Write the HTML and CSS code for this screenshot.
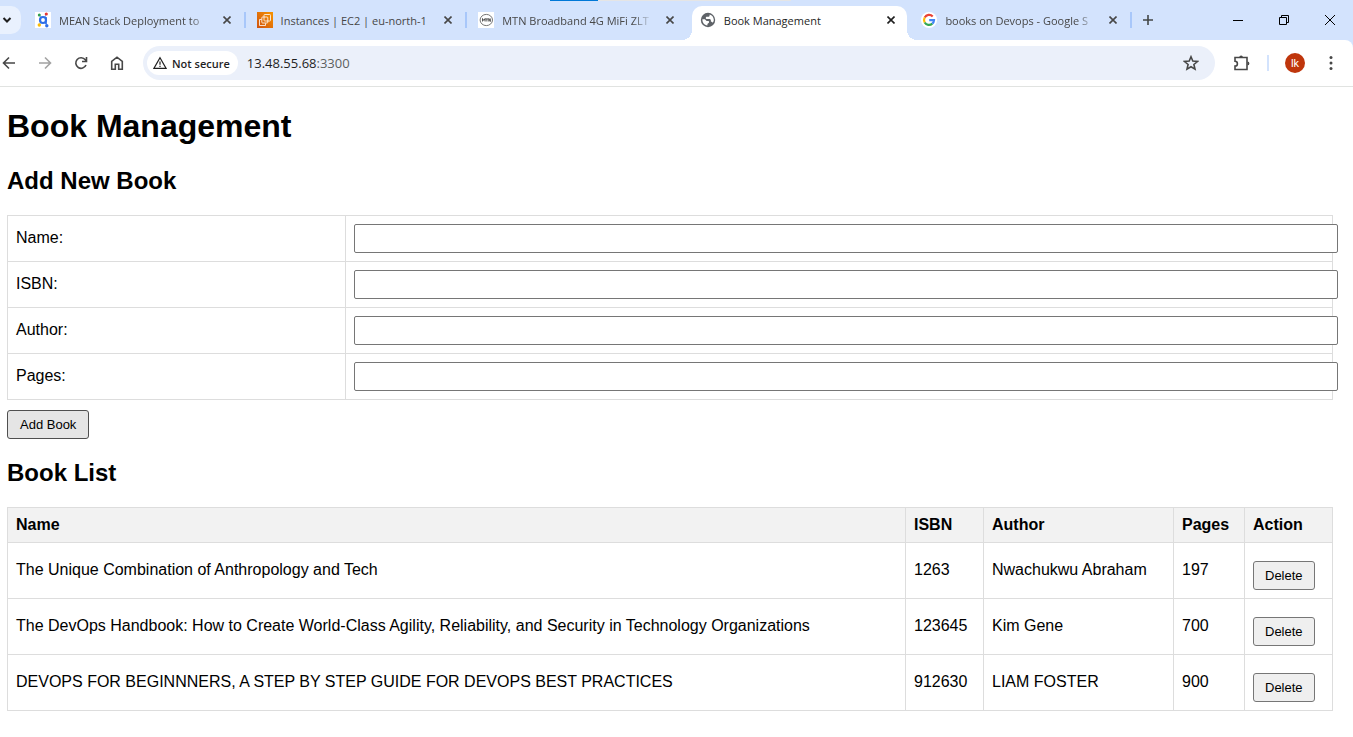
FILE: index.html
```html
<!DOCTYPE html>
<html lang="en">
<head>
<meta charset="utf-8">
<title>Book Management</title>
<link rel="stylesheet" href="styles.css">
</head>
<body>
<header class="browser">
  <div class="load-bar"><span class="load-bar-fill"></span></div>
  <div class="tab-strip">
    <button class="tab-search" aria-label="Search tabs">
      <svg width="12" height="12" viewBox="0 0 12 12" fill="none" stroke="#1f1f1f" stroke-width="2"><path d="M2.500 4 6 7.500 9.500 4"/></svg>
    </button>
    <ul class="tabs">
      <li class="tab">
        <svg class="favicon" viewBox="0 0 16 16"><rect width="16" height="16" fill="#fff"/><path d="M4.500 3.500 6 5.500M11 2.500 10 5M4 12.500 6 10.500M10.500 10.500 11.500 13.500" stroke="#8ab4f8" stroke-width="1"/><circle cx="8" cy="8" r="3" fill="none" stroke="#2f6fe8" stroke-width="2.200"/><path d="M11 5v7" stroke="#2f6fe8" stroke-width="1.600"/><circle cx="4.300" cy="3" r="1.500" fill="#2e9e4f"/><circle cx="11.300" cy="2" r="1.600" fill="#e53935"/><circle cx="4.300" cy="13" r="1.700" fill="#fbbc05"/><circle cx="11.800" cy="13.800" r="1.700" fill="#2f6fe8"/></svg>
        <a class="tab-title tab-title-long" href="#">MEAN Stack Deployment to</a>
        <button class="tab-close" aria-label="Close tab"><svg viewBox="0 0 8 8"><path d="M.5.5l7 7M7.500.5l-7 7"/></svg></button>
      </li>
      <li class="tab">
        <svg class="favicon" viewBox="0 0 16 16"><defs><linearGradient id="ec2" x1="0" y1="1" x2="1" y2="0"><stop stop-color="#cf5311"/><stop offset="1" stop-color="#f79400"/></linearGradient></defs><rect width="16" height="16" fill="url(#ec2)"/><g fill="none" stroke="#fff" stroke-width=".8"><rect x="7" y="2.500" width="6.500" height="6.500" rx=".8"/><rect x="4.800" y="5" width="6" height="6" rx=".8"/><path d="M4.500 7.500h-2v6h6v-2.200"/></g></svg>
        <a class="tab-title" href="#">Instances | EC2 | eu-north-1</a>
        <button class="tab-close" aria-label="Close tab"><svg viewBox="0 0 8 8"><path d="M.5.5l7 7M7.500.5l-7 7"/></svg></button>
      </li>
      <li class="tab tab-before-active">
        <svg class="favicon" viewBox="0 0 16 16"><rect width="16" height="16" fill="#fff"/><ellipse cx="8.300" cy="8" rx="6.200" ry="5.600" fill="none" stroke="#777" stroke-width="1"/><path d="M4.500 9.500v-3l1.300 2 1.300-2v3M7.500 6.900h2.800M8.900 7v2.500M10.800 9.500v-3l1.500 3v-3" fill="none" stroke="#444" stroke-width=".9"/></svg>
        <a class="tab-title tab-title-long" href="#">MTN Broadband 4G MiFi ZLT</a>
        <button class="tab-close" aria-label="Close tab"><svg viewBox="0 0 8 8"><path d="M.5.5l7 7M7.500.5l-7 7"/></svg></button>
      </li>
      <li class="tab tab-active">
        <svg class="favicon" viewBox="0 0 16 16"><circle cx="8" cy="8" r="7.200" fill="#5f6368"/><path d="M9.600 2.400v.8c0 1-.7 1.600-1.600 1.600H7c-.8 0-1.200.5-1.200 1.100 0 .7.500 1.100 1.200 1.100h2.300c1 0 1.600.7 1.600 1.500v1.200c1.100 0 1.600.5 1.800 1 .8-1 1.100-1.900 1.100-3C13.600 5 12 3 9.600 2.400ZM2.400 7.300C2.200 10.600 4.300 13.200 7.400 13.600v-1.300c0-.6.400-.9.900-1.100.5-.3.800-.6.800-1.200s-.5-1-1.100-1H6.600L4.900 7.300Z" fill="#fff"/></svg>
        <a class="tab-title" href="#">Book Management</a>
        <button class="tab-close" aria-label="Close tab"><svg viewBox="0 0 8 8"><path d="M.5.5l7 7M7.500.5l-7 7"/></svg></button>
      </li>
      <li class="tab">
        <svg class="favicon" viewBox="0 0 16 16"><circle cx="8" cy="8" r="8" fill="#fff"/><g fill="none" stroke-width="2.200"><path d="M11.700 4.400A5 5 0 0 0 3.700 5.500" stroke="#ea4335"/><path d="M3.700 5.500a5 5 0 0 0 0 5" stroke="#fbbc05"/><path d="M3.700 10.500a5 5 0 0 0 7.600 1.200" stroke="#34a853"/><path d="M11.300 11.700A5 5 0 0 0 13 8.200H8.200" stroke="#4285f4"/></g></svg>
        <a class="tab-title tab-title-long" href="#">books on Devops - Google S</a>
        <button class="tab-close" aria-label="Close tab"><svg viewBox="0 0 8 8"><path d="M.5.5l7 7M7.500.5l-7 7"/></svg></button>
      </li>
    </ul>
    <button class="new-tab" aria-label="New tab"><svg width="12" height="12" viewBox="0 0 12 12" stroke="#444746" stroke-width="1.600"><path d="M6 1v10M1 6h10"/></svg></button>
    <div class="window-controls">
      <button aria-label="Minimize"><svg width="10" height="10" viewBox="0 0 10 10"><path d="M0 5.500h10"/></svg></button>
      <button aria-label="Restore"><svg width="10" height="10" viewBox="0 0 10 10"><path d="M.5 2.500h7v7h-7zM2.500 2.500v-2h7v7h-2"/></svg></button>
      <button aria-label="Close"><svg width="10" height="10" viewBox="0 0 10 10"><path d="M0 0l10 10M10 0 0 10"/></svg></button>
    </div>
  </div>
  <div class="toolbar">
    <nav class="nav-buttons">
      <button aria-label="Back"><svg width="16" height="16" viewBox="0 0 16 16"><path d="M14 8H2.500M8 2.500 2.500 8 8 13.500"/></svg></button>
      <button class="nav-disabled" aria-label="Forward" disabled><svg width="16" height="16" viewBox="0 0 16 16"><path d="M2 8h11.500M8 2.500 13.500 8 8 13.500"/></svg></button>
      <button aria-label="Reload"><svg width="16" height="16" viewBox="0 0 16 16"><path d="M13 10A5.300 5.300 0 1 1 12.300 4.800L13.500 6.200M13.500 2v4.500H9"/></svg></button>
      <button aria-label="Home"><svg width="16" height="16" viewBox="0 0 16 16"><path d="M2.700 6.300 8 2.200l5.300 4.100v7.900H9.700V9.300H6.300v4.900H2.700z"/></svg></button>
    </nav>
    <div class="omnibox">
      <button class="security-chip"><svg width="14" height="14" viewBox="0 0 14 14"><path d="M7 1.800 13 12.300H1zM7 5.500v3.200M7 9.700v1.300"/></svg>Not secure</button>
      <a class="address" href="#">13.48.55.68<span class="port">:3300</span></a>
      <button class="bookmark" aria-label="Bookmark this tab"><svg width="16" height="16" viewBox="0 0 16 16"><path d="M8 1.800l1.800 4.300 4.700.4-3.600 3 1.100 4.600L8 11.700l-4 2.400 1.100-4.600-3.600-3 4.700-.4z"/></svg></button>
    </div>
    <div class="toolbar-end">
      <button aria-label="Extensions"><svg width="18" height="18" viewBox="0 0 18 18"><path d="M3 3.500h12v12H3v-3.400a2.300 2.300 0 0 0 0-4.800z"/><path d="M7.300 3.200a1.800 1.800 0 0 1 3.600 0zM15.500 7.500a1.900 1.900 0 0 1 0 3.800z" fill="#474747" stroke="none"/></svg></button>
      <span class="toolbar-divider"></span>
      <button aria-label="Profile"><span class="avatar">lk</span></button>
      <button aria-label="Menu"><svg width="16" height="16" viewBox="0 0 16 16"><g fill="#474747" stroke="none"><circle cx="8" cy="2.500" r="1.500"/><circle cx="8" cy="8" r="1.500"/><circle cx="8" cy="13.500" r="1.500"/></g></svg></button>
    </div>
  </div>
</header>
<main class="page">
  <h1>Book Management</h1>
  <h2>Add New Book</h2>
  <form>
    <table class="grid form-grid">
      <tr><td class="field-label"><label for="name">Name:</label></td><td><input class="field" type="text" id="name"></td></tr>
      <tr><td class="field-label"><label for="isbn">ISBN:</label></td><td><input class="field" type="text" id="isbn"></td></tr>
      <tr><td class="field-label"><label for="author">Author:</label></td><td><input class="field" type="text" id="author"></td></tr>
      <tr><td class="field-label"><label for="pages">Pages:</label></td><td><input class="field" type="text" id="pages"></td></tr>
    </table>
    <button class="btn btn-add" type="button">Add Book</button>
  </form>
  <h2>Book List</h2>
  <table class="grid book-grid">
    <thead>
      <tr><th>Name</th><th class="col-isbn">ISBN</th><th class="col-author">Author</th><th class="col-pages">Pages</th><th class="col-action">Action</th></tr>
    </thead>
    <tbody>
      <tr><td>The Unique Combination of Anthropology and Tech</td><td>1263</td><td>Nwachukwu Abraham</td><td>197</td><td><button class="btn" type="button">Delete</button></td></tr>
      <tr><td>The DevOps Handbook: How to Create World-Class Agility, Reliability, and Security in Technology Organizations</td><td>123645</td><td>Kim Gene</td><td>700</td><td><button class="btn" type="button">Delete</button></td></tr>
      <tr><td>DEVOPS FOR BEGINNNERS, A STEP BY STEP GUIDE FOR DEVOPS BEST PRACTICES</td><td>912630</td><td>LIAM FOSTER</td><td>900</td><td><button class="btn" type="button">Delete</button></td></tr>
    </tbody>
  </table>
</main>
</body>
</html>
```
FILE: styles.css
```css
body {
  margin: 0;
  background: #fff;
  color: #000;
  font-family: "Liberation Sans", Arial, sans-serif;
  font-size: 16px;
}

/* Browser frame */
.browser {
  position: relative;
  background: #d3e3fd;
  border-bottom: 1px solid #e1e3e1;
  font-family: "Open Sans", "Noto Sans", sans-serif;
  font-size: 11px;
}
.browser button {
  display: flex;
  align-items: center;
  justify-content: center;
  padding: 0;
  border: 0;
  background: none;
  font: inherit;
}
.browser a {
  text-decoration: none;
}
.load-bar {
  position: absolute;
  top: 0;
  left: 550px;
  width: 241px;
  height: 1px;
  background: #e5e5e5;
}
.load-bar-fill {
  display: block;
  width: 20%;
  height: 1px;
  background: #0078d7;
}
.tab-strip {
  display: flex;
  align-items: center;
  height: 40px;
}
.browser .tab-search {
  width: 21px;
  height: 28px;
  padding-right: 8px;
  border-radius: 0 10px 10px 0;
  background: #e9f1fe;
}
.tabs {
  display: flex;
  flex: 0 1 1108px;
  align-self: stretch;
  min-width: 0;
  margin: 0 0 0 3px;
  padding: 0;
  list-style: none;
}
.tab {
  position: relative;
  display: flex;
  flex: 1 1 0;
  align-items: center;
  min-width: 0;
  box-sizing: border-box;
  padding: 0 11px;
}
.tab::after {
  content: "";
  position: absolute;
  top: 12px;
  right: 0;
  width: 2px;
  height: 16px;
  background: #a8c7fa;
}
.tab-before-active::after {
  display: none;
}
.favicon {
  flex: none;
  width: 16px;
  height: 16px;
}
.tab-title {
  flex: 1;
  min-width: 0;
  margin: 0 9px 0 8px;
  overflow: hidden;
  color: #474747;
  white-space: nowrap;
}
.tab-title-long {
  -webkit-mask-image: linear-gradient(to right, #000 calc(100% - 20px), transparent);
  mask-image: linear-gradient(to right, #000 calc(100% - 20px), transparent);
}
.browser .tab-close {
  flex: none;
  width: 16px;
  height: 16px;
}
.tab-close svg {
  width: 8px;
  height: 8px;
  stroke: #474747;
  stroke-width: 1.6;
}
.tab-active {
  margin: 6px 3px 0;
  padding: 0 8px 6px;
  border-radius: 10px 10px 0 0;
  background: #fff;
}
.tab-active .tab-title {
  color: #1f1f1f;
}
.tab-active .tab-close svg {
  stroke: #1f1f1f;
}
.tab-active::before,
.tab-active::after {
  content: "";
  position: absolute;
  top: auto;
  bottom: 0;
  width: 10px;
  height: 10px;
}
.tab-active::before {
  left: -10px;
  background: radial-gradient(circle at 0 0, transparent 10px, #fff 10px);
}
.tab-active::after {
  right: -10px;
  background: radial-gradient(circle at 100% 0, transparent 10px, #fff 10px);
}
.browser .new-tab {
  width: 28px;
  height: 28px;
  margin-left: 2px;
}
.window-controls {
  display: flex;
  align-self: stretch;
  margin-left: auto;
}
.window-controls button {
  width: 46px;
}
.window-controls svg {
  fill: none;
  stroke: #000;
  stroke-width: 1;
}

/* Toolbar */
.toolbar {
  display: flex;
  align-items: center;
  height: 46px;
  padding-right: 4px;
  border-radius: 0 8px 0 0;
  background: #fff;
}
.toolbar svg {
  fill: none;
  stroke: #474747;
  stroke-width: 1.6;
}
.nav-buttons {
  display: flex;
  margin: 0 8px 0 -9px;
}
.nav-buttons button,
.toolbar-end button {
  width: 36px;
  height: 34px;
}
.nav-disabled {
  opacity: 0.5;
}
.omnibox {
  display: flex;
  flex: 1;
  align-items: center;
  height: 34px;
  padding: 0 8px 0 4px;
  border-radius: 17px;
  background: #ebf0fa;
}
.browser .security-chip {
  gap: 5px;
  height: 24px;
  padding: 0 8px 0 6px;
  border-radius: 12px;
  background: #fff;
  color: #1f1f1f;
  font-weight: 600;
}
.toolbar .security-chip svg {
  stroke: #1f1f1f;
  stroke-width: 1.2;
}
.address {
  flex: 1;
  margin-left: 9px;
  color: #1f1f1f;
  font-size: 13px;
}
.port {
  color: #5c5f5e;
}
.omnibox .bookmark {
  width: 32px;
  height: 32px;
}
.toolbar-end {
  display: flex;
  align-items: center;
  margin-left: 8px;
}
.toolbar-divider {
  width: 2px;
  height: 16px;
  margin: 0 8px;
  background: #d3e3fd;
}
.avatar {
  display: flex;
  align-items: center;
  justify-content: center;
  width: 20px;
  height: 20px;
  border-radius: 50%;
  background: #bf360c;
  color: #fff;
  font-family: Roboto, sans-serif;
  font-size: 11px;
}

/* Page */
.page {
  padding: 21px 20px 26px 7px;
}
h1 {
  margin: 0 0 22px;
  font-size: 32px;
  line-height: 37px;
}
h2 {
  margin: 20px 0;
  font-size: 24px;
  line-height: 28px;
}
.grid {
  width: 100%;
  border-collapse: collapse;
  table-layout: fixed;
}
.grid th,
.grid td {
  padding: 8px;
  border: 1px solid #ddd;
  line-height: 18px;
  text-align: left;
}
.grid th {
  background: #f2f2f2;
}
.form-grid .field-label {
  width: 321px;
  padding-bottom: 10px;
}
.field {
  position: relative;
  display: block;
  width: 100%;
  height: 15px;
  padding: 6px;
  border: 1px solid #767676;
  border-radius: 2px;
  background: #fff;
}
.btn {
  display: block;
  height: 29px;
  margin-top: 10px;
  padding: 0 11px;
  border: 1px solid #767676;
  border-radius: 3px;
  background: #efefef;
  color: #000;
  font-family: inherit;
  font-size: 13px;
}
.btn-add {
  padding: 0 12px;
  border-color: #4f4f4f;
  background: #e5e5e5;
}
.book-grid td:not(:last-child) {
  padding-bottom: 10px;
}
.col-isbn {
  width: 61px;
}
.col-author {
  width: 173px;
}
.col-pages {
  width: 54px;
}
.col-action {
  width: 71px;
}
```
